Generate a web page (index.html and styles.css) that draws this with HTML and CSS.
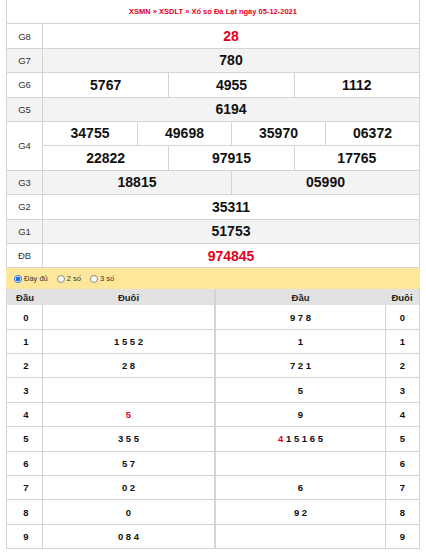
FILE: index.html
```html
<!DOCTYPE html>
<html lang="vi">
<head>
<meta charset="utf-8">
<title>Xổ số Đà Lạt</title>
<link rel="stylesheet" href="styles.css">
</head>
<body>
<div class="page">
  <div class="kq">
    <div class="title">XSMN » XSDLT » Xổ số Đà Lạt ngày 05-12-2021</div>
    <div class="row"><div class="lbl">G8</div><div class="vals"><span class="v red">28</span></div></div>
    <div class="row alt"><div class="lbl">G7</div><div class="vals"><span class="v">780</span></div></div>
    <div class="row"><div class="lbl">G6</div><div class="vals"><span class="v">5767</span><span class="v">4955</span><span class="v">1112</span></div></div>
    <div class="row alt"><div class="lbl">G5</div><div class="vals"><span class="v">6194</span></div></div>
    <div class="row tall"><div class="lbl">G4</div>
      <div class="lines">
        <div class="vals line"><span class="v">34755</span><span class="v">49698</span><span class="v">35970</span><span class="v">06372</span></div>
        <div class="vals line"><span class="v">22822</span><span class="v">97915</span><span class="v">17765</span></div>
      </div>
    </div>
    <div class="row alt"><div class="lbl">G3</div><div class="vals"><span class="v">18815</span><span class="v">05990</span></div></div>
    <div class="row"><div class="lbl">G2</div><div class="vals"><span class="v">35311</span></div></div>
    <div class="row alt"><div class="lbl">G1</div><div class="vals"><span class="v">51753</span></div></div>
    <div class="row"><div class="lbl">ĐB</div><div class="vals"><span class="v red">974845</span></div></div>
  </div>

  <div class="opts">
    <label class="opt"><span class="radio on"></span>Đầy đủ</label>
    <label class="opt"><span class="radio"></span>2 số</label>
    <label class="opt"><span class="radio"></span>3 số</label>
  </div>

  <div class="loto">
    <div class="lt left">
      <div class="lh">Đầu</div><div class="lh">Đuôi</div>
      <div class="c k">0</div><div class="c"></div>
      <div class="c k">1</div><div class="c">1 5 5 2</div>
      <div class="c k">2</div><div class="c">2 8</div>
      <div class="c k">3</div><div class="c"></div>
      <div class="c k">4</div><div class="c"><span class="red">5</span></div>
      <div class="c k">5</div><div class="c">3 5 5</div>
      <div class="c k">6</div><div class="c">5 7</div>
      <div class="c k">7</div><div class="c">0 2</div>
      <div class="c k">8</div><div class="c">0</div>
      <div class="c k">9</div><div class="c">0 8 4</div>
    </div>
    <div class="lt right">
      <div class="lh">Đầu</div><div class="lh">Đuôi</div>
      <div class="c">9 7 8</div><div class="c k">0</div>
      <div class="c">1</div><div class="c k">1</div>
      <div class="c">7 2 1</div><div class="c k">2</div>
      <div class="c">5</div><div class="c k">3</div>
      <div class="c">9</div><div class="c k">4</div>
      <div class="c"><span class="red">4</span> 1 5 1 6 5</div><div class="c k">5</div>
      <div class="c"></div><div class="c k">6</div>
      <div class="c">6</div><div class="c k">7</div>
      <div class="c">9 2</div><div class="c k">8</div>
      <div class="c"></div><div class="c k">9</div>
    </div>
  </div>
</div>
</body>
</html>
```

FILE: styles.css
```css
* { box-sizing: border-box; }
body {
  margin: 0;
  background: #fff;
  font-family: "Liberation Sans", Arial, sans-serif;
  color: #111;
}
.page {
  margin: 0 6px;
  width: 414px;
}
.kq {
  border-left: 1px solid #d4d4d4;
  border-right: 1px solid #d4d4d4;
}
.title {
  height: 24.4px;
  border-bottom: 1px solid #d4d4d4;
  display: flex;
  align-items: center;
  justify-content: center;
  color: #e3001b;
  font-size: 7.5px;
  font-weight: bold;
}
.row {
  display: grid;
  grid-template-columns: 36px 1fr;
  height: 24.4px;
  border-bottom: 1px solid #d4d4d4;
}
.row.tall { height: 48.8px; }
.row.alt { background: #f3f3f3; }
.lbl {
  border-right: 1px solid #d4d4d4;
  display: flex;
  align-items: center;
  justify-content: center;
  font-size: 9.5px;
  color: #333;
}
.vals {
  display: grid;
  grid-auto-flow: column;
  grid-auto-columns: 1fr;
}
.lines {
  display: grid;
  grid-template-rows: 1fr 1fr;
}
.line:first-child { border-bottom: 1px solid #d4d4d4; }
.v {
  display: flex;
  align-items: center;
  justify-content: center;
  font-size: 14px;
  font-weight: bold;
  color: #111;
}
.v + .v { border-left: 1px solid #d4d4d4; }
.red { color: #e3001b; }
.v.red { color: #e3001b; }

.opts {
  height: 21px;
  background: #fee79b;
  display: flex;
  align-items: center;
  padding-left: 8px;
  gap: 9px;
}
.opt {
  display: flex;
  align-items: center;
  gap: 2px;
  font-size: 7.5px;
  color: #333;
}
.radio {
  width: 8px;
  height: 8px;
  border-radius: 50%;
  border: 1px solid #8a8a8a;
  background: #fff;
}
.radio.on {
  border-color: #1a6fdc;
  background: radial-gradient(circle, #1a6fdc 0 2px, #fff 2.6px);
}

.loto {
  display: grid;
  grid-template-columns: 209px 205px;
}
.lt {
  display: grid;
  grid-auto-rows: 24.4px;
  border-left: 1px solid #d4d4d4;
  border-right: 1px solid #d4d4d4;
}
.lt.left { grid-template-columns: 36px 1fr; grid-template-rows: 16px; }
.lt.right { grid-template-columns: 1fr 34px; grid-template-rows: 16px; }
.lh {
  background: #e2e2e2;
  display: flex;
  align-items: center;
  justify-content: center;
  font-size: 9.5px;
  font-weight: bold;
  color: #222;
}
.c {
  display: flex;
  align-items: center;
  justify-content: center;
  border-bottom: 1px solid #d4d4d4;
  font-size: 9.5px;
  font-weight: bold;
  color: #111;
  white-space: pre;
}
.lt.left .k { border-right: 1px solid #d4d4d4; padding-left: 3px; }
.lt.right .k { border-left: 1px solid #d4d4d4; }
```
